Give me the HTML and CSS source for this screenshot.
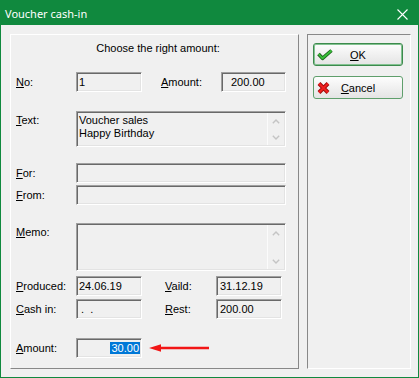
FILE: index.html
```html
<!DOCTYPE html>
<html lang="en">
<head>
    <meta charset="UTF-8">
    <title>Voucher cash-in</title>
    <link rel="stylesheet" href="styles.css">
</head>
<body>

    <div class="window">
        <div class="titlebar">
            <span class="title">Voucher cash-in</span>
            <svg class="close" width="11" height="11" viewBox="0 0 11 11">
                <path d="M0.5 0.5 L10.5 10.5 M10.5 0.5 L0.5 10.5" stroke="#fff" stroke-width="1.1" fill="none"/>
            </svg>
        </div>

        <div class="client">
            <div class="panel main">
                <div class="heading">Choose the right amount:</div>

                <div class="row row-no">
                    <span class="lbl"><u>N</u>o:</span>
                    <div class="field w66">1</div>
                    <span class="lbl lbl-amount"><u>A</u>mount:</span>
                    <div class="field w65 pad-amount">200.00</div>
                </div>

                <div class="row row-top row-text">
                    <span class="lbl"><u>T</u>ext:</span>
                    <div class="field wide area h36">
                        <div class="area-text">Voucher sales<br>Happy Birthday</div>
                        <div class="scroll">
                            <div class="arr"><svg width="8" height="5" viewBox="0 0 8 5"><path d="M0.8 4.3 L4 1.1 L7.2 4.3" stroke="#c4c4c4" stroke-width="1.4" fill="none"/></svg></div>
                            <div class="arr"><svg width="8" height="5" viewBox="0 0 8 5"><path d="M0.8 0.7 L4 3.9 L7.2 0.7" stroke="#c4c4c4" stroke-width="1.4" fill="none"/></svg></div>
                        </div>
                    </div>
                </div>

                <div class="row row-for">
                    <span class="lbl"><u>F</u>or:</span>
                    <div class="field wide"></div>
                </div>

                <div class="row row-from">
                    <span class="lbl"><u>F</u>rom:</span>
                    <div class="field wide"></div>
                </div>

                <div class="row row-top row-memo">
                    <span class="lbl"><u>M</u>emo:</span>
                    <div class="field wide area h48">
                        <div class="area-text"></div>
                        <div class="scroll">
                            <div class="arr"><svg width="8" height="5" viewBox="0 0 8 5"><path d="M0.8 4.3 L4 1.1 L7.2 4.3" stroke="#c4c4c4" stroke-width="1.4" fill="none"/></svg></div>
                            <div class="arr"><svg width="8" height="5" viewBox="0 0 8 5"><path d="M0.8 0.7 L4 3.9 L7.2 0.7" stroke="#c4c4c4" stroke-width="1.4" fill="none"/></svg></div>
                        </div>
                    </div>
                </div>

                <div class="row row-produced">
                    <span class="lbl"><u>P</u>roduced:</span>
                    <div class="field w66">24.06.19</div>
                    <span class="lbl lbl-valid"><u>V</u>aild:</span>
                    <div class="field w66 pad-date">31.12.19</div>
                </div>

                <div class="row row-cash">
                    <span class="lbl"><u>C</u>ash in:</span>
                    <div class="field w66 dots">.  .</div>
                    <span class="lbl lbl-valid"><u>R</u>est:</span>
                    <div class="field w66 pad-date">200.00</div>
                </div>

                <div class="row row-amount">
                    <span class="lbl"><u>A</u>mount:</span>
                    <div class="field w66 sel"><span class="sel-text">30.00</span></div>
                    <svg class="arrow" width="62" height="10" viewBox="0 0 62 10">
                        <path d="M9 5 L60 5" stroke="#f21616" stroke-width="2.5"/>
                        <path d="M0 5 L12 1.3 L12 8.7 Z" fill="#f21616"/>
                    </svg>
                </div>
            </div>

            <div class="panel side">
                <button class="btn btn-ok">
                    <svg class="ico" width="16" height="12" viewBox="0 0 16 12">
                        <path d="M1.5 5 L5.5 9.3 L14.5 1.5" stroke="#1c621c" stroke-width="3.6" fill="none" stroke-linejoin="round"/>
                        <path d="M1.5 5 L5.5 9.3 L14.5 1.5" stroke="#39bf39" stroke-width="1.8" fill="none" stroke-linejoin="round"/>
                    </svg>
                    <span class="btn-text"><u>O</u>K</span>
                </button>
                <button class="btn btn-cancel">
                    <svg class="ico" width="13" height="12" viewBox="0 0 13 12">
                        <path d="M2 1.5 L11 10.5 M11 1.5 L2 10.5" stroke="#9e0a0a" stroke-width="4" fill="none"/>
                        <path d="M2 1.5 L11 10.5 M11 1.5 L2 10.5" stroke="#f02020" stroke-width="2.2" fill="none"/>
                    </svg>
                    <span class="btn-text"><u>C</u>ancel</span>
                </button>
            </div>
        </div>
    </div>

</body>
</html>
```

FILE: styles.css
```css
body {
    margin: 0;
    font-family: "Liberation Sans", Arial, sans-serif;
    font-size: 11px;
    color: #000;
}
.window {
    width: 419px;
    height: 378px;
    box-sizing: border-box;
    border: 1px solid #10893e;
    background: #f0f0f0;
    display: flex;
    flex-direction: column;
}
.titlebar {
    height: 24px;
    flex: none;
    background: #10893e;
    color: #fff;
    display: flex;
    align-items: center;
    justify-content: space-between;
    padding-left: 4px;
    font-family: "Noto Sans", "Liberation Sans", sans-serif;
    font-size: 11px;
}
.close {
    margin-right: 10px;
    margin-top: 3px;
}
.client {
    flex: 1;
    display: flex;
    gap: 8px;
    padding: 9px 7px 8px 9px;
}
.panel {
    box-sizing: border-box;
    border: 1px solid;
}
.main {
    width: 289px;
    border-color: #fff #888 #888 #fff;
    padding: 7px 0 0 5px;
}
.side {
    width: 104px;
    border-color: #888 #fff #fff #888;
    padding: 8px 0 0 5px;
}
.heading {
    line-height: 13px;
    text-align: center;
    padding-left: 2px;
}
.row {
    display: flex;
    align-items: center;
    height: 20px;
}
.row-top {
    align-items: flex-start;
    height: auto;
}
.row-top .lbl {
    padding-top: 3px;
    line-height: 13px;
}
.row-no { margin-top: 17px; }
.row-text { margin-top: 19px; }
.row-for { margin-top: 16px; }
.row-from { margin-top: 2px; }
.row-memo { margin-top: 18px; }
.row-produced { margin-top: 5px; }
.row-cash { margin-top: 3px; }
.row-amount { margin-top: 19px; }

.lbl {
    width: 60px;
    flex: none;
}
.lbl-amount {
    margin-left: 19px;
}
.lbl-valid {
    margin-left: 23px;
    width: 51px;
}
.field {
    box-sizing: border-box;
    height: 20px;
    flex: none;
    border: 1px solid;
    border-color: #a0a0a0 #fff #fff #a0a0a0;
    box-shadow: inset 1px 1px #696969, inset -1px -1px #e3e3e3;
    padding-left: 2px;
    display: flex;
    align-items: center;
    white-space: pre;
}
.w66 { width: 66px; }
.w65 { width: 65px; }
.wide { width: 210px; }
.pad-amount { padding-left: 9px; }
.pad-date { padding-left: 3px; }
.dots { padding-left: 4px; }
.area {
    align-items: stretch;
    padding: 1px 1px 1px 2px;
}
.h36 { height: 36px; }
.h48 { height: 48px; }
.area-text {
    flex: 1;
    padding-top: 1px;
    line-height: 13px;
    white-space: normal;
}
.scroll {
    width: 16px;
    border-left: 1px solid #fbfbfb;
    display: flex;
    flex-direction: column;
    justify-content: space-between;
}
.arr {
    height: 16px;
    display: flex;
    align-items: center;
    justify-content: center;
}
.sel {
    justify-content: flex-end;
    padding-right: 1px;
}
.sel-text {
    background: #0078d7;
    color: #fff;
    line-height: 12px;
    padding: 0 1px;
}
.arrow {
    margin-left: 7px;
}
.btn {
    display: grid;
    grid-template-columns: 20px 1fr 20px;
    align-items: center;
    width: 90px;
    height: 23px;
    box-sizing: border-box;
    padding: 0;
    border: 1px solid #5f9f6c;
    border-radius: 3px;
    background: linear-gradient(#fdfdfd, #e4e4e4);
    font: inherit;
    color: #000;
}
.btn-ok {
    border-color: #3d8a4d;
    box-shadow: inset 0 0 0 1px #82c290;
}
.btn-cancel {
    margin-top: 10px;
}
.ico {
    margin-left: 3px;
}
.btn-text {
    text-align: center;
}
```
